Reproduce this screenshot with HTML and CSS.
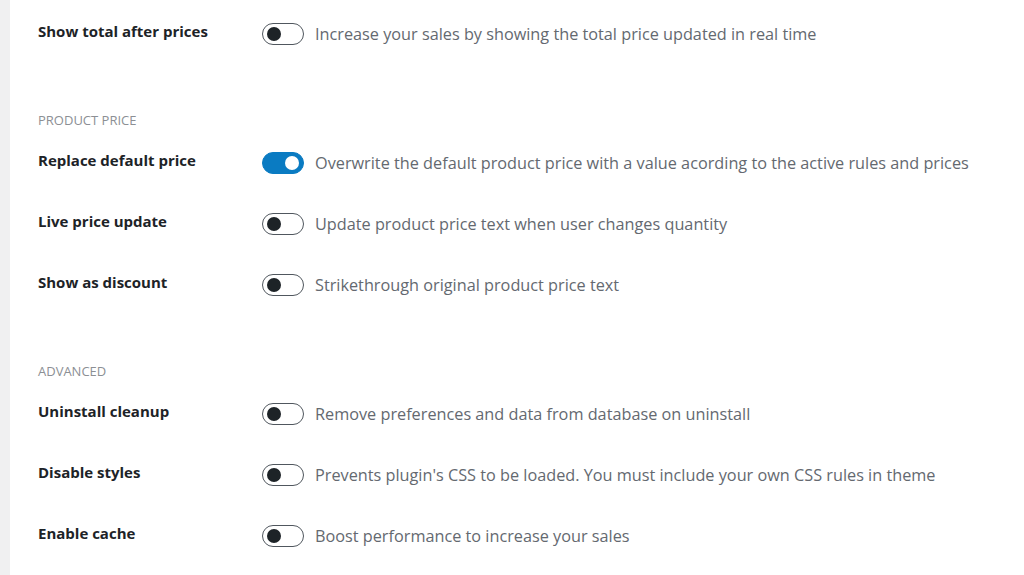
FILE: index.html
```html
<!DOCTYPE html>
<html lang="en">
<head>
    <meta charset="UTF-8" />
    <meta name="viewport" content="width=device-width, initial-scale=1" />
    <title>Settings</title>
    <link rel="stylesheet" href="styles.css">
</head>
<body>
    <div class="sidebar"></div>

    <main class="settings">
        <section class="group">
            <div class="row">
                <div class="label">Show total after prices</div>
                <label class="control">
                    <span class="toggle"></span>
                    <span class="desc">Increase your sales by showing the total price updated in real time</span>
                </label>
            </div>
        </section>

        <section class="group">
            <h3 class="group-title">PRODUCT PRICE</h3>
            <div class="row">
                <div class="label">Replace default price</div>
                <label class="control">
                    <span class="toggle on"></span>
                    <span class="desc">Overwrite the default product price with a value acording to the active rules and prices</span>
                </label>
            </div>
            <div class="row">
                <div class="label">Live price update</div>
                <label class="control">
                    <span class="toggle"></span>
                    <span class="desc">Update product price text when user changes quantity</span>
                </label>
            </div>
            <div class="row">
                <div class="label">Show as discount</div>
                <label class="control">
                    <span class="toggle"></span>
                    <span class="desc">Strikethrough original product price text</span>
                </label>
            </div>
        </section>

        <section class="group">
            <h3 class="group-title">ADVANCED</h3>
            <div class="row">
                <div class="label">Uninstall cleanup</div>
                <label class="control">
                    <span class="toggle"></span>
                    <span class="desc">Remove preferences and data from database on uninstall</span>
                </label>
            </div>
            <div class="row">
                <div class="label">Disable styles</div>
                <label class="control">
                    <span class="toggle"></span>
                    <span class="desc">Prevents plugin's CSS to be loaded. You must include your own CSS rules in theme</span>
                </label>
            </div>
            <div class="row">
                <div class="label">Enable cache</div>
                <label class="control">
                    <span class="toggle"></span>
                    <span class="desc">Boost performance to increase your sales</span>
                </label>
            </div>
        </section>
    </main>
</body>
</html>
```

FILE: styles.css
```css
body {
    margin: 0;
    background: #fff;
    font-family: 'Open Sans', 'Noto Sans', sans-serif;
    color: #1d2327;
    display: flex;
    min-height: 100vh;
}
.sidebar {
    width: 10px;
    flex: none;
    background: #f0f0f1;
}
.settings {
    padding: 10px 0 0 28px;
    flex: 1;
}
.group + .group {
    margin-top: 41px;
}
.group-title {
    margin: 0 0 11px;
    font-size: 13px;
    line-height: 16px;
    font-weight: 400;
    color: #8c8f94;
}
.row {
    display: grid;
    grid-template-columns: 224px 1fr;
    height: 61px;
}
.label {
    padding-top: 10px;
    font-size: 15px;
    line-height: 22px;
    font-weight: 700;
}
.control {
    padding-top: 13px;
    display: flex;
    align-items: center;
    gap: 11px;
    height: 22px;
}
.toggle {
    width: 40px;
    height: 20px;
    border: 1px solid #50575e;
    border-radius: 11px;
    position: relative;
    flex: none;
}
.toggle::after {
    content: '';
    position: absolute;
    top: 3px;
    left: 4px;
    width: 14px;
    height: 14px;
    border-radius: 50%;
    background: #1d2327;
}
.toggle.on {
    background: #0a7bc2;
    border-color: #0a7bc2;
}
.toggle.on::after {
    left: auto;
    right: 4px;
    background: #fff;
}
.desc {
    font-size: 16.25px;
    color: #646970;
    white-space: nowrap;
}
```
